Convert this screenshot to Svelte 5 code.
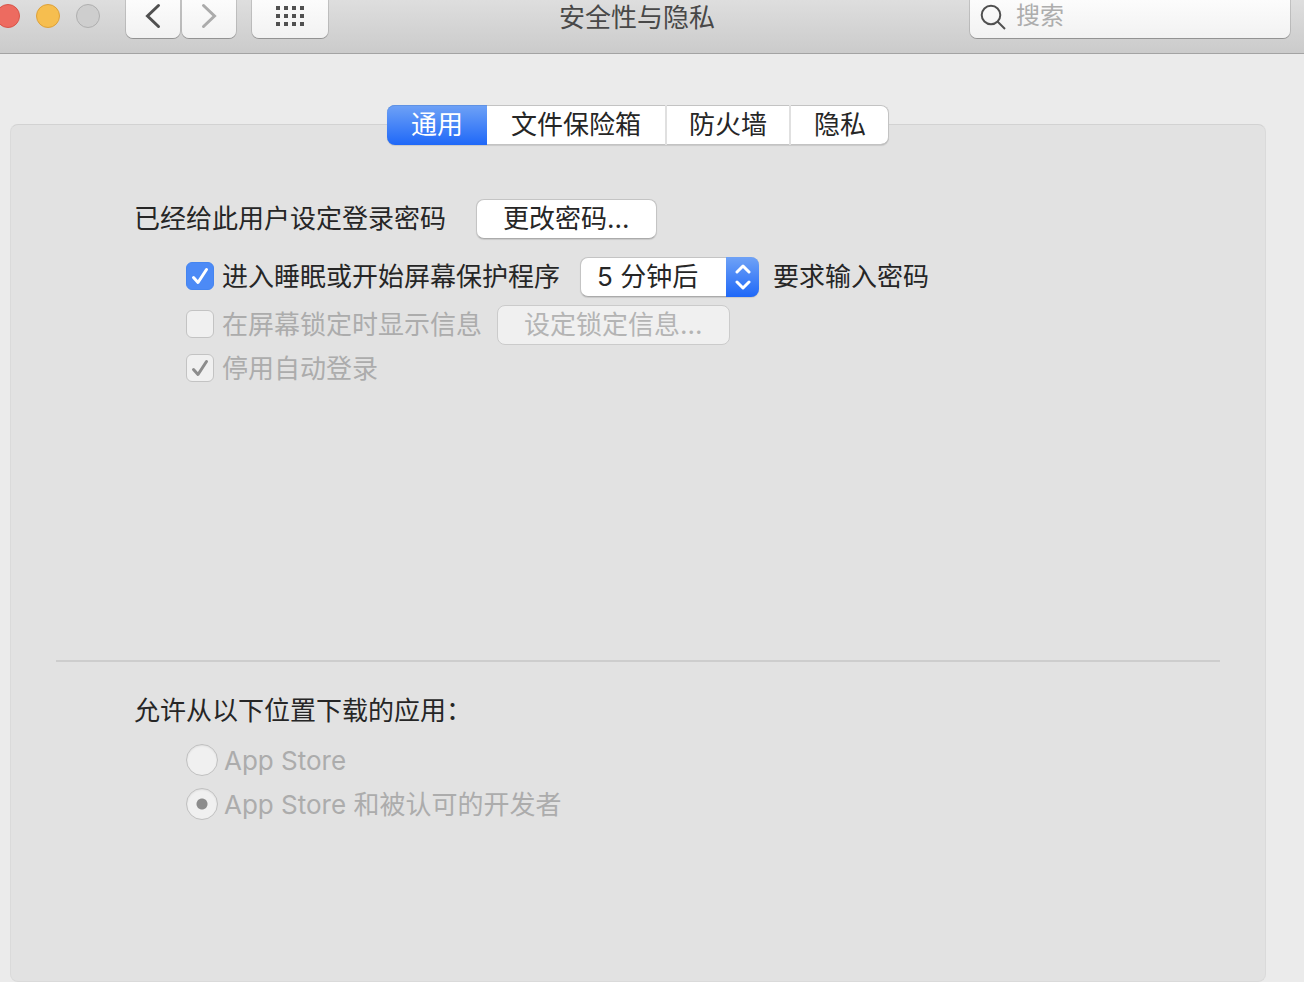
<script>
  const tabs = ['通用', '文件保险箱', '防火墙', '隐私'];
  let active = $state('通用');
  let requirePassword = $state(true);
  let delay = $state('5 分钟后');
  const dotRows = [0, 8, 16];
  const dotColumns = [0, 8, 16, 24];
</script>

{#snippet tick()}
  <svg class="tick" viewBox="0 0 28 28" aria-hidden="true">
    <path d="M7.5 15.5 L12 20.5 L20.5 7.5" />
  </svg>
{/snippet}

<div class="window">
  <header>
    <div class="controls">
      <div class="lights">
        <button class="light close" aria-label="关闭"></button>
        <button class="light minimise" aria-label="最小化"></button>
        <button class="light zoom" aria-label="缩放" disabled></button>
      </div>
      <div class="history">
        <button class="tool" aria-label="后退">
          <svg width="16" height="26" viewBox="0 0 16 26"><path d="M13.5 2.5 L2.5 13 L13.5 23.5" /></svg>
        </button>
        <button class="tool" aria-label="前进" disabled>
          <svg width="16" height="26" viewBox="0 0 16 26"><path d="M2.5 2.5 L13.5 13 L2.5 23.5" /></svg>
        </button>
      </div>
      <button class="tool all" aria-label="显示全部">
        <svg width="28" height="20" viewBox="0 0 28 20">
          {#each dotRows as y}
            {#each dotColumns as x}
              <rect {x} {y} width="4" height="4" />
            {/each}
          {/each}
        </svg>
      </button>
    </div>
    <h1>安全性与隐私</h1>
    <label class="search">
      <svg width="26" height="26" viewBox="0 0 26 26" aria-hidden="true">
        <circle cx="11" cy="11" r="9.3" />
        <path d="M17.5 17.5 L25 25" />
      </svg>
      <input type="text" placeholder="搜索" aria-label="搜索" />
    </label>
  </header>

  <main>
    <nav>
      {#each tabs as tab}
        <button class:selected={tab === active} onclick={() => (active = tab)}>{tab}</button>
      {/each}
    </nav>

    <div class="panel">
      <section class="login">
        <div class="row">
          <span>已经给此用户设定登录密码</span>
          <button class="push change">更改密码...</button>
        </div>
        <div class="row indent wake">
          <label class="option">
            <span class="box">
              <input type="checkbox" bind:checked={requirePassword} />
              {#if requirePassword}{@render tick()}{/if}
            </span>
            进入睡眠或开始屏幕保护程序
          </label>
          <div class="popup">
            <select bind:value={delay} aria-label="要求输入密码的时间">
              <option>5 分钟后</option>
            </select>
            <span class="cap">
              <svg width="16" height="26" viewBox="0 0 16 26" aria-hidden="true">
                <path d="M2 8 L8 2 L14 8 M2 18 L8 24 L14 18" />
              </svg>
            </span>
          </div>
          <span>要求输入密码</span>
        </div>
        <div class="row indent message">
          <label class="option off">
            <span class="box"><input type="checkbox" disabled /></span>
            在屏幕锁定时显示信息
          </label>
          <button class="push set" disabled>设定锁定信息...</button>
        </div>
        <div class="row indent auto">
          <label class="option off">
            <span class="box">
              <input type="checkbox" checked disabled />
              {@render tick()}
            </span>
            停用自动登录
          </label>
        </div>
      </section>

      <hr />

      <section class="sources">
        <h2>允许从以下位置下载的应用：</h2>
        <label class="option off choice">
          <input type="radio" name="source" disabled />
          App Store
        </label>
        <label class="option off choice">
          <input type="radio" name="source" checked disabled />
          App Store 和被认可的开发者
        </label>
      </section>
    </div>
  </main>
</div>

<style>
  :global(body) {
    margin: 0;
    background: #ebebeb;
  }

  .window {
    min-height: 100vh;
    display: flex;
    flex-direction: column;
    overflow: hidden;
    color: #262626;
    font: 26px/40px Inter, "Noto Sans CJK SC", sans-serif;
  }

  .window *,
  .window {
    box-sizing: border-box;
  }

  button,
  input,
  select {
    appearance: none;
    margin: 0;
    padding: 0;
    border: 0;
    border-radius: 0;
    color: inherit;
    font: inherit;
  }

  svg {
    display: block;
    fill: none;
  }

  header {
    display: grid;
    grid-template-columns: 1fr auto 1fr;
    align-items: start;
    height: 54px;
    padding-right: 14px;
    background: linear-gradient(#dedede, #cbcbcb);
    border-bottom: 1px solid #a3a3a3;
  }

  .controls,
  .lights,
  .history {
    display: flex;
  }

  .lights {
    gap: 16px;
    margin: 4px 26px 0 -4px;
  }

  .light {
    width: 24px;
    height: 24px;
    border-radius: 50%;
  }

  .close {
    background: #ed6b60;
    border: 1px solid #d85549;
  }

  .minimise {
    background: #f6be4f;
    border: 1px solid #dda13a;
  }

  .zoom {
    background: #cecece;
    border: 1px solid #afafaf;
  }

  .history {
    gap: 2px;
    margin-right: 16px;
  }

  .tool,
  .search {
    height: 38px;
    border-radius: 0 0 7px 7px;
    background: linear-gradient(#fcfcfc, #f2f2f2);
    box-shadow: 0 0 0 1px #00000020, 0 1px 0 #00000030;
  }

  .tool {
    display: flex;
    justify-content: center;
    width: 54px;
    padding-top: 3px;
  }

  .tool path {
    stroke: #505050;
    stroke-width: 3;
    stroke-linecap: round;
  }

  .tool:disabled path {
    stroke: #ababab;
  }

  .all {
    width: 76px;
    padding-top: 6px;
  }

  .all rect {
    fill: #505050;
  }

  h1 {
    margin: 0 16px 0 0;
    color: #484848;
    font-size: 26px;
    line-height: 36px;
    font-weight: 400;
  }

  .search {
    justify-self: end;
    display: flex;
    width: 100%;
    max-width: 320px;
    gap: 10px;
    padding: 0 10px;
  }

  .search svg {
    flex: none;
    margin-top: 4px;
    stroke: #505050;
    stroke-width: 2;
  }

  .search input {
    min-width: 0;
    flex: 1;
    height: 32px;
    background: none;
    font-size: 24px;
    outline: 0;
  }

  .search input::placeholder {
    color: #adadad;
    opacity: 1;
  }

  main {
    flex: 1;
    display: flex;
    flex-direction: column;
    padding: 51px 38px 0 10px;
  }

  nav {
    position: relative;
    align-self: center;
    display: flex;
    height: 40px;
    margin-bottom: -21px;
    border-radius: 8px;
    background: #fff;
    box-shadow: inset 0 0 0 1px #c3c3c3, inset 0 -1px 0 #a2a2a2, 0 1px 1px #0000001c;
  }

  nav button {
    padding: 0 24px;
    background: none;
    line-height: 40px;
  }

  nav button:nth-child(n + 3) {
    padding: 0 22px;
    border-left: 2px solid #e0e0e0;
  }

  nav button:first-child {
    border-radius: 8px 0 0 8px;
  }

  nav button:last-child {
    padding: 0 23px;
    border-radius: 0 8px 8px 0;
  }

  nav .selected {
    background: linear-gradient(#6fa2f6, #1f68f8);
    color: #fff;
    box-shadow: inset 0 1px 0 #5f92e4;
  }

  .panel {
    flex: 1;
    padding: 74px 45px 0;
    border: 1px solid #dadada;
    border-top-color: #d2d2d2;
    border-radius: 8px;
    background: #e2e2e2;
  }

  .login {
    min-height: 461px;
    padding-left: 78px;
  }

  .row {
    display: flex;
    align-items: center;
    white-space: nowrap;
  }

  .indent {
    padding-left: 52px;
  }

  .wake {
    margin-top: 18px;
  }

  .message {
    margin-top: 8px;
  }

  .auto {
    margin-top: 4px;
  }

  .push {
    height: 40px;
    border: 1px solid #c4c4c4;
    border-bottom-color: #ababab;
    border-radius: 8px;
    background: #fff;
    box-shadow: 0 1px 1px #0000001c;
    line-height: 38px;
  }

  .change {
    margin-left: 30px;
    padding: 0 26px;
  }

  .set {
    margin-left: 15px;
    padding: 0 26px;
  }

  .push:disabled {
    border-color: #cbcbcb;
    background: #f0f0f0;
    box-shadow: none;
    color: #b4b4b4;
  }

  .option {
    display: flex;
    align-items: center;
    gap: 8px;
  }

  .off {
    color: #acacac;
  }

  .box {
    display: grid;
    width: 28px;
    height: 28px;
    margin-bottom: 2px;
  }

  .box > :global(*) {
    grid-area: 1 / 1;
  }

  .box input {
    border: 1px solid #c3c3c3;
    border-radius: 6px;
    background: #f0f0f0;
  }

  .box input:checked:enabled {
    border-color: #4585f0;
    background: #4c8af6;
  }

  .tick {
    pointer-events: none;
    stroke: #fff;
    stroke-width: 3;
    stroke-linecap: round;
    stroke-linejoin: round;
  }

  .off .tick {
    stroke: #8c8c8c;
  }

  .popup {
    display: grid;
    height: 40px;
    margin: 0 14px 0 20px;
  }

  .popup select,
  .cap {
    grid-area: 1 / 1;
  }

  .popup select {
    width: 179px;
    padding-left: 16px;
    border: 1px solid #c4c4c4;
    border-bottom-color: #ababab;
    border-radius: 8px;
    background: #fff;
    box-shadow: 0 1px 1px #0000001c;
    line-height: 38px;
  }

  .cap {
    justify-self: end;
    display: grid;
    place-items: center;
    width: 33px;
    border-radius: 0 8px 8px 0;
    background: linear-gradient(#6fa2f6, #1f68f8);
    pointer-events: none;
  }

  .cap path {
    stroke: #fff;
    stroke-width: 3;
    stroke-linecap: round;
    stroke-linejoin: round;
  }

  hr {
    height: 2px;
    margin: 0;
    border: 0;
    background: #cdcdcd;
  }

  .sources {
    padding: 29px 0 48px 78px;
  }

  h2 {
    margin: 0 0 8px;
    font-size: 26px;
    line-height: 40px;
    font-weight: 400;
  }

  .choice {
    gap: 6px;
    height: 44px;
    margin-left: 52px;
  }

  .choice input {
    width: 32px;
    height: 32px;
    margin-bottom: 2px;
    border: 1px solid #c0c0c0;
    border-radius: 50%;
    background: #f0f0f0;
    box-shadow: inset 0 1px 2px #00000014;
  }

  .choice input:checked {
    background: radial-gradient(circle, #8c8c8c 5px, #f0f0f0 6px);
  }
</style>
